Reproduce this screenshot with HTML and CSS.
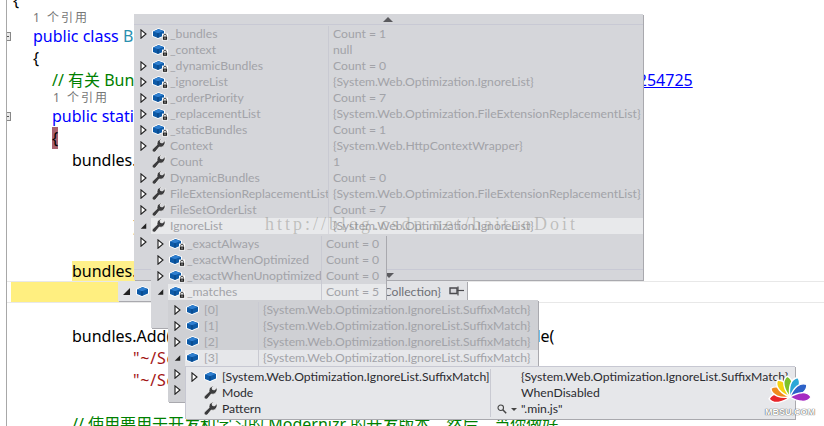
FILE: index.html
```html
<!DOCTYPE html>
<html lang="zh">
<head>
<meta charset="utf-8">
<title>Debugger data tips</title>
<link rel="stylesheet" href="styles.css">
</head>
<body>
<svg class="defs" width="0" height="0" aria-hidden="true">
  <symbol id="cube" viewBox="0 0 13 11">
    <path d="M6.500 0 13 2.500v5.500L6 11 0 8.500V3z" fill="#fff"/>
    <path d="M6.500 1 12 3v4.500L6 10 1 8V3.500z" fill="#0d5aa7"/>
    <path d="M1.500 3.500 6.500 1.300 11.500 3 6 5.200z" fill="#2f7fd0"/>
    <path d="M6 5.200v4.600" stroke="#083a72" stroke-width=".8"/>
  </symbol>
  <symbol id="lock" viewBox="0 0 7 8">
    <rect x="0" y="0" width="7" height="8" fill="#fff"/>
    <path d="M2 3.500V2.200a1.500 1.500 0 0 1 3 0v1.300" fill="none" stroke="#222" stroke-width="1"/>
    <rect x="1" y="3.500" width="5" height="3.800" fill="#222"/>
    <rect x="3" y="4.600" width="1" height="1.400" fill="#fff"/>
  </symbol>
  <symbol id="wrench" viewBox="0 0 14 13">
    <path d="M13 1.500 10.500 4 8.500 3.500 8 1.500 10.500 0C7.500-.3 5 1.500 5 4.300c0 .5 0 .9.2 1.300L.8 9.800c-.9.9-.9 2 0 2.800s2 .7 2.800-.1L7.300 8c3.200.9 6.500-1.700 5.700-6.500z" fill="#3c3c3e" stroke="#fff" stroke-width=".7"/>
  </symbol>
  <symbol id="exp" viewBox="0 0 7 10">
    <path d="M1 .8 6 5 1 9.200z" fill="#fff" stroke="#1e1e1e" stroke-width="1.100"/>
  </symbol>
  <symbol id="col" viewBox="0 0 9 9">
    <path d="M8 1v7H1z" fill="#222"/>
  </symbol>
  <symbol id="glass" viewBox="0 0 12 12">
    <circle cx="4.500" cy="4.500" r="3.300" fill="none" stroke="#444" stroke-width="1.300"/>
    <path d="M7 7l4 4" stroke="#444" stroke-width="1.800"/>
  </symbol>
  <symbol id="pin" viewBox="0 0 16 10">
    <path d="M1 2h7v5.500H1z" fill="#d8d8dc" stroke="#4a4a4e" stroke-width="1.400"/>
    <path d="M8 4.500h7" stroke="#4a4a4e" stroke-width="1.200"/>
    <path d="M9 .5v9" stroke="#4a4a4e" stroke-width="1.200"/>
  </symbol>
</svg>

<main class="editor">
  <div class="code">
    <div class="line l1"><span class="brace">{</span></div>
    <div class="refs l1">1 个引用</div>
    <div class="line l1"><span class="fold"></span><span class="kw">public class </span><span class="type">BundleConfig</span></div>
    <div class="line l1">{</div>
    <div class="line l2 comment">// 有关 Bundling 的详细信息，请访问 <a class="link">http://go.microsoft.com/fwlink/?LinkId=254725</a></div>
    <div class="refs l2">1 个引用</div>
    <div class="line l2"><span class="fold"></span><span class="kw">public static void</span> RegisterBundles(BundleCollection bundles)</div>
    <div class="line l2"><span class="match">{</span></div>
    <div class="line l3">bundles.Add(new ScriptBundle("~/bundles/jquery")</div>
    <div class="line l3"></div>
    <div class="line l3"></div>
    <div class="line l4">)</div>
    <div class="line l3"></div>
    <div class="line l3"><span class="hit">bundles.IgnoreList.Clear();</span></div>
    <div class="line current"><span class="band"></span></div>
    <div class="line l3"></div>
    <div class="line l3">bundles.Add(new ScriptBundle("~/bundles/jqueryvalid").Include(</div>
    <div class="line l4 str">"~/Scripts/jquery.unobtrusive*",</div>
    <div class="line l4 str">"~/Scripts/jquery.validate*"));</div>
    <div class="line l3"></div>
    <div class="line l3 comment">// 使用要用于开发和学习的 Modernizr 的开发版本。然后，当你做好</div>
  </div>
</main>

<section class="tip tip1">
  <div class="scroll up"><span class="arrow-up"></span></div>
  <div class="rows">
    <div class="row"><svg class="ex"><use href="#exp"/></svg><span class="ic"><svg class="cube"><use href="#cube"/></svg><svg class="lock"><use href="#lock"/></svg></span><span class="name">_bundles</span><span class="val">Count = 1</span></div>
    <div class="row"><span class="ex"></span><span class="ic"><svg class="cube"><use href="#cube"/></svg><svg class="lock"><use href="#lock"/></svg></span><span class="name">_context</span><span class="val">null</span></div>
    <div class="row"><svg class="ex"><use href="#exp"/></svg><span class="ic"><svg class="cube"><use href="#cube"/></svg><svg class="lock"><use href="#lock"/></svg></span><span class="name">_dynamicBundles</span><span class="val">Count = 0</span></div>
    <div class="row"><svg class="ex"><use href="#exp"/></svg><span class="ic"><svg class="cube"><use href="#cube"/></svg><svg class="lock"><use href="#lock"/></svg></span><span class="name">_ignoreList</span><span class="val">{System.Web.Optimization.IgnoreList}</span></div>
    <div class="row"><svg class="ex"><use href="#exp"/></svg><span class="ic"><svg class="cube"><use href="#cube"/></svg><svg class="lock"><use href="#lock"/></svg></span><span class="name">_orderPriority</span><span class="val">Count = 7</span></div>
    <div class="row"><svg class="ex"><use href="#exp"/></svg><span class="ic"><svg class="cube"><use href="#cube"/></svg><svg class="lock"><use href="#lock"/></svg></span><span class="name">_replacementList</span><span class="val">{System.Web.Optimization.FileExtensionReplacementList}</span></div>
    <div class="row"><svg class="ex"><use href="#exp"/></svg><span class="ic"><svg class="cube"><use href="#cube"/></svg><svg class="lock"><use href="#lock"/></svg></span><span class="name">_staticBundles</span><span class="val">Count = 1</span></div>
    <div class="row"><svg class="ex"><use href="#exp"/></svg><span class="ic"><svg class="wr"><use href="#wrench"/></svg></span><span class="name">Context</span><span class="val">{System.Web.HttpContextWrapper}</span></div>
    <div class="row"><span class="ex"></span><span class="ic"><svg class="wr"><use href="#wrench"/></svg></span><span class="name">Count</span><span class="val">1</span></div>
    <div class="row"><svg class="ex"><use href="#exp"/></svg><span class="ic"><svg class="wr"><use href="#wrench"/></svg></span><span class="name">DynamicBundles</span><span class="val">Count = 0</span></div>
    <div class="row"><svg class="ex"><use href="#exp"/></svg><span class="ic"><svg class="wr"><use href="#wrench"/></svg></span><span class="name">FileExtensionReplacementList</span><span class="val">{System.Web.Optimization.FileExtensionReplacementList}</span></div>
    <div class="row"><svg class="ex"><use href="#exp"/></svg><span class="ic"><svg class="wr"><use href="#wrench"/></svg></span><span class="name">FileSetOrderList</span><span class="val">Count = 7</span></div>
    <div class="row on"><svg class="ex"><use href="#col"/></svg><span class="ic"><svg class="wr"><use href="#wrench"/></svg></span><span class="name">IgnoreList</span><span class="val">{System.Web.Optimization.IgnoreList}</span></div>
    <div class="row"><svg class="ex"><use href="#exp"/></svg></div>
  </div>
  <div class="scroll down"><span class="arrow-down"></span></div>
</section>

<section class="tip bar">
  <svg class="ex"><use href="#col"/></svg>
  <svg class="cube"><use href="#cube"/></svg>
  <span class="bar-val">{System.Web.Optimization.BundleCollection}</span>
  <svg class="pin"><use href="#pin"/></svg>
</section>

<section class="tip tip2">
  <div class="row"><svg class="ex"><use href="#exp"/></svg><span class="ic"><svg class="cube"><use href="#cube"/></svg><svg class="lock"><use href="#lock"/></svg></span><span class="name">_exactAlways</span><span class="val">Count = 0</span></div>
  <div class="row"><svg class="ex"><use href="#exp"/></svg><span class="ic"><svg class="cube"><use href="#cube"/></svg><svg class="lock"><use href="#lock"/></svg></span><span class="name">_exactWhenOptimized</span><span class="val">Count = 0</span></div>
  <div class="row"><svg class="ex"><use href="#exp"/></svg><span class="ic"><svg class="cube"><use href="#cube"/></svg><svg class="lock"><use href="#lock"/></svg></span><span class="name">_exactWhenUnoptimized</span><span class="val">Count = 0</span></div>
  <div class="row on"><svg class="ex"><use href="#col"/></svg><span class="ic"><svg class="cube"><use href="#cube"/></svg><svg class="lock"><use href="#lock"/></svg></span><span class="name">_matches</span><span class="val">Count = 5</span></div>
</section>

<section class="tip tip3">
  <div class="row"><svg class="ex"><use href="#exp"/></svg><span class="ic"><svg class="cube"><use href="#cube"/></svg></span><span class="name">[0]</span><span class="val">{System.Web.Optimization.IgnoreList.SuffixMatch}</span></div>
  <div class="row"><svg class="ex"><use href="#exp"/></svg><span class="ic"><svg class="cube"><use href="#cube"/></svg></span><span class="name">[1]</span><span class="val">{System.Web.Optimization.IgnoreList.SuffixMatch}</span></div>
  <div class="row"><svg class="ex"><use href="#exp"/></svg><span class="ic"><svg class="cube"><use href="#cube"/></svg></span><span class="name">[2]</span><span class="val">{System.Web.Optimization.IgnoreList.SuffixMatch}</span></div>
  <div class="row on"><svg class="ex"><use href="#col"/></svg><span class="ic"><svg class="cube"><use href="#cube"/></svg></span><span class="name">[3]</span><span class="val">{System.Web.Optimization.IgnoreList.SuffixMatch}</span></div>
  <div class="row"><svg class="ex"><use href="#exp"/></svg></div>
  <div class="row"><svg class="ex"><use href="#exp"/></svg></div>
</section>

<section class="tip tip4">
  <div class="row"><svg class="ex"><use href="#exp"/></svg><span class="ic"><svg class="cube"><use href="#cube"/></svg></span><span class="name">[System.Web.Optimization.IgnoreList.SuffixMatch]</span><span class="tool"></span><span class="val">{System.Web.Optimization.IgnoreList.SuffixMatch}</span></div>
  <div class="row"><span class="ex"></span><span class="ic"><svg class="wr"><use href="#wrench"/></svg></span><span class="name">Mode</span><span class="tool"></span><span class="val">WhenDisabled</span></div>
  <div class="row"><span class="ex"></span><span class="ic"><svg class="wr"><use href="#wrench"/></svg></span><span class="name">Pattern</span><span class="tool"><svg class="glass"><use href="#glass"/></svg><span class="caret"></span></span><span class="val">".min.js"</span></div>
</section>

<div class="watermark">http://blog.csdn.net/haitaoDoit</div>

<aside class="logo">
  <svg class="peacock" viewBox="-22 -24 44 31" width="44" height="31">
    <g stroke="#fff" stroke-width="1.400">
      <path fill="#e8262a" transform="rotate(-95)" d="M0 0C-5-8-6.500-17 0-21 6.500-17 5-8 0 0z"/>
      <path fill="#f08a1c" transform="rotate(-66)" d="M0 0C-5-8-6.500-17 0-21 6.500-17 5-8 0 0z"/>
      <path fill="#f5d312" transform="rotate(-37)" d="M0 0C-5-8-6.500-17 0-21 6.500-17 5-8 0 0z"/>
      <path fill="#7cc22a" transform="rotate(-8)" d="M0 0C-5-8-6.500-17 0-21 6.500-17 5-8 0 0z"/>
      <path fill="#2aa7d8" transform="rotate(22)" d="M0 0C-5-8-6.500-17 0-21 6.500-17 5-8 0 0z"/>
      <path fill="#2d62c8" transform="rotate(53)" d="M0 0C-5-8-6.500-17 0-21 6.500-17 5-8 0 0z"/>
      <path fill="#a62bc2" transform="rotate(90)" d="M0 0C-5-8-6.500-17 0-21 6.500-17 5-8 0 0z"/>
    </g>
  </svg>
  <span class="logo-text">MBSU.COM</span>
</aside>
</body>
</html>
```
FILE: styles.css
```css
* { box-sizing: border-box; }
html, body { margin: 0; padding: 0; }
body {
  position: relative;
  width: 824px;
  height: 426px;
  overflow: hidden;
  background: #fff;
  font-family: "Noto Sans", "Noto Sans CJK SC", sans-serif;
}
.defs { position: absolute; }

/* editor */
.editor {
  height: 426px;
  overflow: hidden;
  margin-left: 6px;
  border-left: 1px solid #a8a8a8;
}
.code { margin-top: -11px; color: #000; font-size: 16px; }
.line {
  position: relative;
  height: 22px;
  line-height: 22px;
  white-space: nowrap;
}
.refs {
  height: 14px;
  line-height: 14px;
  font-size: 12px;
  letter-spacing: 2px;
  color: #777;
  white-space: nowrap;
}
.l1 { padding-left: 26px; }
.l2 { padding-left: 45px; }
.l3 { padding-left: 65px; }
.l4 { padding-left: 126px; }
.brace { margin-left: -20px; }
.refs.l1 { padding-left: 26px; }
.refs.l2 { padding-left: 46px; }
.fold {
  position: absolute;
  left: -5px;
  top: 7px;
  width: 9px;
  height: 9px;
  background: #e8e8e8 linear-gradient(#555, #555) center / 5px 1px no-repeat;
  border: 1px solid #888;
}
.kw { color: #0000ff; }
.type { color: #2b91af; }
.comment { color: #008000; }
.str { color: #a31515; letter-spacing: .8px; }
.link { color: #0000ff; text-decoration: underline; margin-left: 15px; }
.match { background: #a9616f; display: inline-block; width: 6px; }
.hit { background: #fff08a; display: inline-block; width: 481px; height: 20px; line-height: 20px; margin-top: 2px; }
.current {
  border-top: 1px solid #e8e8e8;
  border-bottom: 1px solid #e8e8e8;
}
.band { display: block; margin-left: 4px; width: 110px; height: 20px; background: #ffef80; }

/* data tips */
.tip {
  position: absolute;
  background: #d5d6da;
  color: #a2a3a8;
  font-family: "Lato", "Noto Sans", sans-serif;
  font-size: 12.2px;
  box-shadow: 1px 1px 0 #a9a9ae;
}
.row {
  display: flex;
  align-items: center;
  height: 16px;
  line-height: 16px;
  white-space: nowrap;
}
.ex { width: 7px; height: 10px; flex: none; margin-left: 6px; margin-right: 4px; }
.ic { position: relative; display: block; flex: none; width: 19px; height: 16px; }
.cube { position: absolute; left: 1px; top: 2px; width: 13px; height: 11px; }
.lock { position: absolute; left: 11px; top: 7px; width: 6px; height: 8px; }
.wr { position: absolute; left: 1px; top: 1px; width: 14px; height: 13px; }
.name { flex: none; overflow: hidden; }
.val { flex: none; padding-left: 4px; border-left: 1px solid #c9cad2; height: 16px; }

.tip1 { left: 134px; top: 14px; width: 509px; height: 266px; }
.scroll { height: 11px; display: flex; justify-content: center; align-items: center; }
.up { border-bottom: 1px solid #c8c9d4; padding-right: 2px; }
.rows { height: 244px; overflow: hidden; padding-top: 1px; }
.down { border-top: 1px solid #c8c9d4; padding-right: 0; }
.arrow-up { width: 0; height: 0; border: 5px solid transparent; border-top: 0; border-bottom: 5px solid #5a5a5e; }
.arrow-down { width: 0; height: 0; border: 5px solid transparent; border-bottom: 0; border-top: 5px solid #5a5a5e; }
.tip1 .name { width: 158px; }
.tip1 .on .name, .tip1 .on .ic, .tip1 .on .val { background: #e8e9eb; }
.tip1 .on .val { flex: 1; border-left-color: #d8d8de; }

.bar {
  left: 118px;
  top: 281px;
  width: 349px;
  height: 20px;
  display: flex;
  align-items: center;
  background: #e2e3e6;
  color: #6f7076;
}
.bar .ex { width: 9px; height: 9px; margin-left: 4px; margin-right: 5px; }
.bar .cube { position: static; flex: none; }
.bar-val { flex: 1; min-width: 0; text-align: right; overflow: hidden; }
.pin { width: 16px; height: 10px; margin: 0 2px 0 8px; flex: none; }

.tip2 { left: 151px; top: 235px; width: 235px; height: 93px; padding-top: 1px; }
.tip2 .name { width: 134px; }
.tip2 .on .ic, .tip2 .on .name, .tip2 .on .val { background: #e8e9eb; }
.tip2 .on .val { flex: 1; }

.tip3 { left: 168px; top: 300px; width: 370px; height: 102px; padding-top: 2px; background: #cfd0d4; }
.tip3 .name { width: 54px; }
.tip3 .on .ic, .tip3 .on .name, .tip3 .on .val { background: #e6e7ea; }
.tip3 .on .val { flex: 1; }

.tip4 {
  left: 186px;
  top: 366px;
  width: 609px;
  height: 53px;
  padding-top: 2px;
  background: #e6e7ea;
  color: #2b2b30;
  border-top: 1px solid #c7c8d2;
  box-shadow: 1px 1px 0 #a9a9ae, -1px 0 0 #c7c8d2;
}
.tip4 .ex { margin-left: 5px; margin-right: 5px; }
.tip4 .ic { width: 19px; }
.tip4 .name { width: 268px; }
.tool { flex: none; display: flex; align-items: center; gap: 4px; width: 31px; height: 16px; padding-left: 6px; border-left: 1px solid #c9cad2; }
.tip4 .val { border: 0; padding-left: 0; }
.glass { width: 10px; height: 10px; flex: none; }
.caret { width: 0; height: 0; border: 3px solid transparent; border-bottom: 0; border-top: 3px solid #444; }

/* overlays */
.watermark {
  position: absolute;
  left: 265px;
  top: 214px;
  font-family: "Liberation Serif", serif;
  font-size: 18px;
  line-height: 20px;
  letter-spacing: 3px;
  color: rgba(120, 120, 110, .38);
  white-space: nowrap;
}
.logo {
  position: absolute;
  left: 767px;
  top: 373px;
  width: 46px;
  display: flex;
  flex-direction: column;
  align-items: center;
}
.logo-text {
  font-family: "Liberation Sans", sans-serif;
  font-size: 9px;
  font-weight: 700;
  line-height: 10px;
  color: #fff;
  margin-top: 3px;
  text-shadow: 0 0 1px #555, 0 0 1px #555;
}
```
